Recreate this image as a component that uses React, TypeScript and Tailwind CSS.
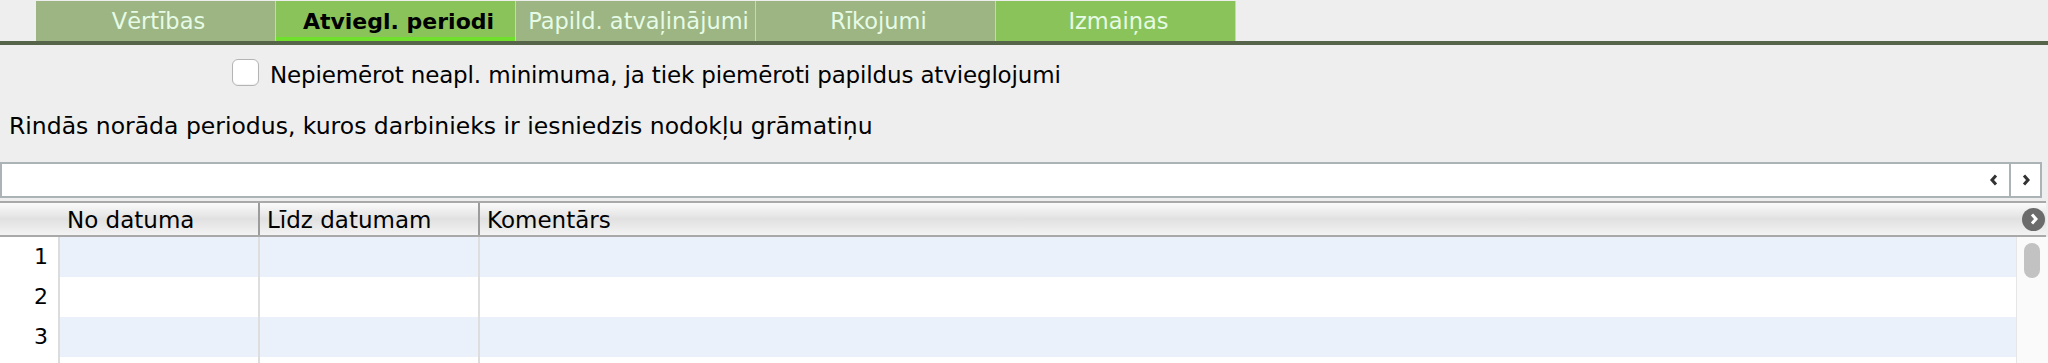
import React from "react";

const tabs = [
  { label: "Vērtības", active: false, bright: false },
  { label: "Atviegl. periodi", active: true, bright: true },
  { label: "Papild. atvaļinājumi", active: false, bright: false },
  { label: "Rīkojumi", active: false, bright: false },
  { label: "Izmaiņas", active: false, bright: true },
];

const rows = [1, 2, 3, 4];

const Chevron = ({ dir, color = "#333" }: { dir: "left" | "right"; color?: string }) => (
  <svg width="12" height="14" viewBox="0 0 12 14">
    <polyline
      points={dir === "left" ? "8,2.5 4,7 8,11.5" : "4,2.5 8,7 4,11.5"}
      fill="none"
      stroke={color}
      strokeWidth="3"
    />
  </svg>
);

const App = () => {
  return (
    <main className="w-[2048px] h-[363px] overflow-hidden bg-[#eeeeee] font-['DejaVu_Sans',sans-serif] text-black">
      {/* tab strip */}
      <div className="flex pl-[36px] pt-px border-b-4 border-[#56654a]">
        {tabs.map((t) => (
          <div
            key={t.label}
            className={`relative flex h-[40px] w-[240px] items-center justify-center overflow-hidden whitespace-nowrap border-r border-[#c6d6b6] ${
              t.bright ? "bg-[#8bc35b]" : "bg-[#9db583]"
            } ${t.active ? "text-[22px] font-bold text-black" : "text-[22.5px] text-[#e6fbe6]"}`}
          >
            <span className="mt-[1px] pl-[6px]">{t.label}</span>
            {t.active && (
              <div className="absolute bottom-0 left-0 h-[4px] w-full bg-[#6fe12c]" />
            )}
          </div>
        ))}
      </div>

      {/* checkbox option */}
      <div className="h-[63px] pt-[14px]">
        <label className="flex items-start pl-[232px]">
          <span className="h-[27px] w-[27px] rounded-[6px] border border-[#b4b4b4] bg-white shadow-[inset_0_-1px_1px_rgba(0,0,0,0.06)]" />
          <span className="ml-[11px] mt-[3px] text-[23px] leading-[27px] tracking-[-0.15px]">
            Nepiemērot neapl. minimuma, ja tiek piemēroti papildus atvieglojumi
          </span>
        </label>
      </div>

      <p className="h-[30px] pl-[9px] pt-[3px] text-[23.5px] leading-[30px]">
        Rindās norāda periodus, kuros darbinieks ir iesniedzis nodokļu grāmatiņu
      </p>

      {/* filter input */}
      <div className="mt-[24px] flex h-[36px] w-[2042px] border-2 border-[#abb3b6] bg-white">
        <div className="flex-1" />
        <div className="flex w-[31px] items-center justify-center">
          <Chevron dir="left" />
        </div>
        <div className="flex w-[31px] items-center justify-center border-l-2 border-[#abb3b6]">
          <Chevron dir="right" />
        </div>
      </div>

      {/* table header */}
      <div className="mt-[3px] flex h-[36px] w-[2046px] border-y-2 border-[#a9a9a9] bg-gradient-to-b from-[#fbfbfb] via-[#e1e1e1] to-[#f3f3f3] text-[23px] leading-[30px]">
        <div className="w-[258px] pl-[67px] pt-[2px]">No datuma</div>
        <div className="w-[220px] border-l-2 border-[#9c9c9c] pl-[7px] pt-[2px]">
          Līdz datumam
        </div>
        <div className="flex-1 border-l-2 border-[#9c9c9c] pl-[7px] pt-[2px]">
          Komentārs
        </div>
        <div className="flex w-[24px] items-center">
          <span className="flex h-[23px] w-[23px] items-center justify-center rounded-full bg-[#6b6b6b]">
            <Chevron dir="right" color="#fff" />
          </span>
        </div>
      </div>

      {/* table body */}
      <div className="flex">
        <div className="w-[2016px]">
          {rows.map((n) => (
            <div key={n} className="flex h-[40px] text-[22px] leading-[40px]">
              <div className="w-[58px] bg-white pr-[10px] text-right">{n <= 3 ? n : ""}</div>
              <div
                className={`flex flex-1 border-l-2 border-[#dcdcdc] ${
                  n % 2 === 1 ? "bg-[#eaf1fb]" : "bg-white"
                }`}
              >
                <div className="w-[198px]" />
                <div className="w-[222px] border-x-2 border-[#dedede]" />
                <div className="flex-1" />
              </div>
            </div>
          ))}
        </div>
        <div className="h-[126px] flex-1 border-l border-[#e6e6e6] bg-[#fafafa] pl-[7px] pt-[6px]">
          <div className="h-[35px] w-[16px] rounded-full bg-[#c2c2c2]" />
        </div>
      </div>
    </main>
  );
};

export default App;
